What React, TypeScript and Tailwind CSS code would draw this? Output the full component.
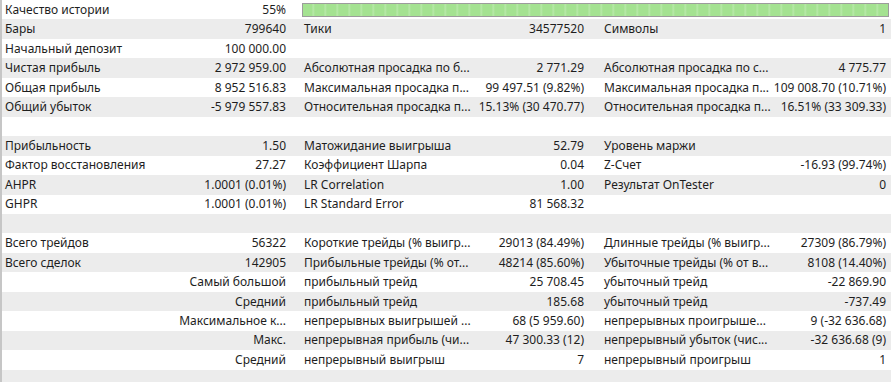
type Cell = [string, string] | null;

interface Row {
  a?: Cell;
  aRight?: boolean;
  b?: Cell;
  c?: Cell;
  bar?: boolean;
}

const ROWS: Row[] = [
  { a: ["Качество истории", "55%"], bar: true },
  { a: ["Бары", "799640"], b: ["Тики", "34577520"], c: ["Символы", "1"] },
  { a: ["Начальный депозит", "100 000.00"] },
  {
    a: ["Чистая прибыль", "2 972 959.00"],
    b: ["Абсолютная просадка по б...", "2 771.29"],
    c: ["Абсолютная просадка по с...", "4 775.77"],
  },
  {
    a: ["Общая прибыль", "8 952 516.83"],
    b: ["Максимальная просадка п...", "99 497.51 (9.82%)"],
    c: ["Максимальная просадка п...", "109 008.70 (10.71%)"],
  },
  {
    a: ["Общий убыток", "-5 979 557.83"],
    b: ["Относительная просадка п...", "15.13% (30 470.77)"],
    c: ["Относительная просадка п...", "16.51% (33 309.33)"],
  },
  {},
  {
    a: ["Прибыльность", "1.50"],
    b: ["Матожидание выигрыша", "52.79"],
    c: ["Уровень маржи", ""],
  },
  {
    a: ["Фактор восстановления", "27.27"],
    b: ["Коэффициент Шарпа", "0.04"],
    c: ["Z-Счет", "-16.93 (99.74%)"],
  },
  {
    a: ["AHPR", "1.0001 (0.01%)"],
    b: ["LR Correlation", "1.00"],
    c: ["Результат OnTester", "0"],
  },
  { a: ["GHPR", "1.0001 (0.01%)"], b: ["LR Standard Error", "81 568.32"] },
  {},
  {
    a: ["Всего трейдов", "56322"],
    b: ["Короткие трейды (% выигр...", "29013 (84.49%)"],
    c: ["Длинные трейды (% выигр...", "27309 (86.79%)"],
  },
  {
    a: ["Всего сделок", "142905"],
    b: ["Прибыльные трейды (% от...", "48214 (85.60%)"],
    c: ["Убыточные трейды (% от в...", "8108 (14.40%)"],
  },
  {
    a: ["Самый большой", ""],
    aRight: true,
    b: ["прибыльный трейд", "25 708.45"],
    c: ["убыточный трейд", "-22 869.90"],
  },
  {
    a: ["Средний", ""],
    aRight: true,
    b: ["прибыльный трейд", "185.68"],
    c: ["убыточный трейд", "-737.49"],
  },
  {
    a: ["Максимальное к...", ""],
    aRight: true,
    b: ["непрерывных выигрышей ...", "68 (5 959.60)"],
    c: ["непрерывных проигрыше...", "9 (-32 636.68)"],
  },
  {
    a: ["Макс.", ""],
    aRight: true,
    b: ["непрерывная прибыль (чи...", "47 300.33 (12)"],
    c: ["непрерывный убыток (чис...", "-32 636.68 (9)"],
  },
  {
    a: ["Средний", ""],
    aRight: true,
    b: ["непрерывный выигрыш", "7"],
    c: ["непрерывный проигрыш", "1"],
  },
  {},
];

function Pair({ cell, right, className }: { cell?: Cell; right?: boolean; className: string }) {
  return (
    <div className={`flex shrink-0 items-center justify-between ${className}`}>
      {cell && right ? (
        <span className="ml-auto whitespace-nowrap">{cell[0]}</span>
      ) : cell ? (
        <>
          <span className="whitespace-nowrap">{cell[0]}</span>
          <span className="whitespace-nowrap">{cell[1]}</span>
        </>
      ) : null}
    </div>
  );
}

function QualityBar() {
  return (
    <div className="ml-[5px] mr-[2px] h-[14px] flex-1 border border-[#9c9c9c] bg-[#a4e291] bg-[repeating-linear-gradient(90deg,#a4e291_0px,#a4e291_9px,#b9e9ab_10px,#a4e291_12px)]" />
  );
}

export default function App() {
  return (
    <div
      className="h-[382px] w-[891px] overflow-hidden border-l-2 border-[#c6c6c6] bg-white text-[12px] text-[#1e1e1e]"
      style={{ fontFamily: '"Noto Sans", "Open Sans", sans-serif' }}
    >
      {ROWS.map((r, i) => (
        <div
          key={i}
          className={`flex h-[19.46px] items-center ${i % 2 === 1 ? "bg-[#ececec]" : "bg-white"}`}
        >
          <Pair cell={r.a} right={r.aRight} className="w-[295px] pl-[3px] pr-[11px]" />
          {r.bar ? (
            <QualityBar />
          ) : (
            <>
              <Pair cell={r.b} className="w-[298px] pl-[7px] pr-[11px]" />
              <Pair cell={r.c} className="w-[296px] pl-[9px] pr-[5px]" />
            </>
          )}
        </div>
      ))}
    </div>
  );
}
